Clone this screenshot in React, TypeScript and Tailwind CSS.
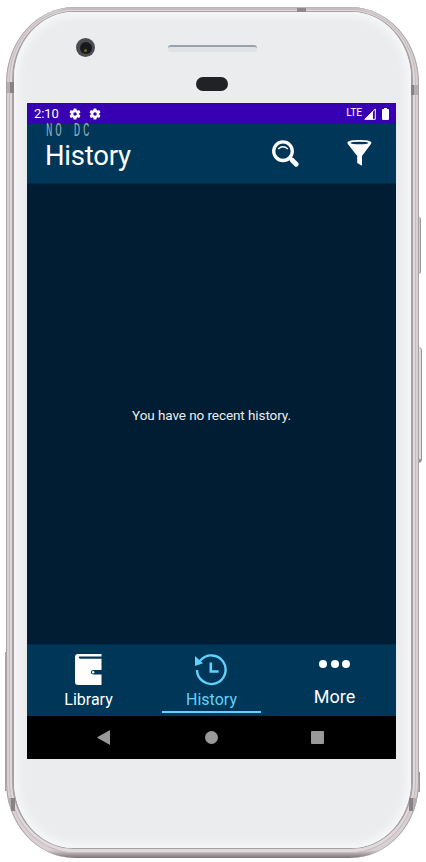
function Gear() {
  return (
    <svg className="size-[14px]" viewBox="0 0 24 24" fill="white">
      <path d="M19.14 12.94c.04-.3.06-.61.06-.94s-.02-.64-.07-.94l2.03-1.58a.49.49 0 0 0 .12-.61l-1.92-3.32a.49.49 0 0 0-.59-.22l-2.39.96c-.5-.38-1.03-.7-1.62-.94l-.36-2.54a.48.48 0 0 0-.48-.41h-3.84a.48.48 0 0 0-.47.41l-.36 2.54c-.59.24-1.13.57-1.62.94l-2.39-.96a.48.48 0 0 0-.59.22L2.74 8.87a.47.47 0 0 0 .12.61l2.03 1.58c-.05.3-.09.63-.09.94s.02.64.07.94l-2.03 1.58a.49.49 0 0 0-.12.61l1.92 3.32c.12.22.37.29.59.22l2.39-.96c.5.38 1.03.7 1.62.94l.36 2.54c.05.24.24.41.48.41h3.84c.24 0 .44-.17.47-.41l.36-2.54c.59-.24 1.13-.56 1.62-.94l2.39.96c.22.08.47 0 .59-.22l1.92-3.32a.48.48 0 0 0-.12-.61zM12 15a3 3 0 1 1 0-6 3 3 0 0 1 0 6z" />
    </svg>
  );
}

function StatusBar() {
  return (
    <div className="flex h-[21px] shrink-0 items-center bg-[#3700b3] pl-[7px] pr-[7px] text-white">
      <span className="w-[34px] text-[13px] leading-none tracking-[-0.1px]">2:10</span>
      <div className="flex gap-[6px]">
        <Gear />
        <Gear />
      </div>
      <span className="ml-auto text-[10.5px] leading-none tracking-[-0.25px]">LTE</span>
      <svg className="ml-[2px] h-[12px] w-[12px]" viewBox="0 0 12 12">
        <path d="M11.3 1V11.3H.8Z" fill="none" stroke="white" strokeWidth="1" />
        <path d="M9 3V11.5H.5Z" fill="white" />
      </svg>
      <svg className="ml-[6px] h-[12px] w-[7px]" viewBox="0 0 7 12">
        <path d="M2 0h3v1h1q1 0 1 1v9q0 1-1 1H1q-1 0-1-1V2q0-1 1-1h1z" fill="white" />
      </svg>
    </div>
  );
}

function Header() {
  return (
    <div className="flex h-[60px] shrink-0 border-b border-[#002b47] bg-[#003658] pl-[18px] pr-[24px]">
      <div className="flex flex-col">
        <span className="ml-px -mt-px h-[16px] w-[46px] origin-left scale-x-[.54] whitespace-pre font-['Liberation_Mono',monospace] text-[20px] leading-[16px] tracking-[5.1px] text-[#8fabbb]">NO DC</span>
        <h1 className="mt-[4px] text-[27.5px] leading-[26px] tracking-[-0.25px] text-white">History</h1>
      </div>
      <svg className="ml-auto mt-[15px] h-[28px] w-[28px]" viewBox="0 0 28 28" fill="none" stroke="white">
        <circle cx="12" cy="12.2" r="9.3" strokeWidth="3.3" />
        <path d="M7.2 10Q12 5.5 16.8 10" strokeWidth="1.4" />
        <path d="M18.5 18.5l2.5 2.5" strokeWidth="3" />
        <path d="M21 21l4.2 4.2" strokeWidth="4.8" strokeLinecap="round" />
      </svg>
      <svg className="ml-[48px] mt-[15px] h-[28px] w-[25px]" viewBox="0 0 25 28">
        <path d="M.4 3.5C.4.2 24.4.2 24.4 3.5q0 1-1.2 2.6L15 17v9.8L10.2 24v-7L1.6 6.1Q.4 4.5.4 3.5Z" fill="white" />
        <ellipse cx="12.4" cy="4" rx="9" ry="1.3" fill="#003658" />
      </svg>
    </div>
  );
}

function BottomTabs() {
  return (
    <div className="grid h-[72px] shrink-0 grid-cols-3 border-t border-[#002d4b] bg-[#003658] text-white">
      <div className="flex flex-col items-center pt-[9px]">
        <svg className="h-[31px] w-[27px]" viewBox="0 0 27 31">
          <path d="M3 0H26.5V2.5H4.8q-1 0-1 .8t1 1.5H26.5V16H19q-3 0-3 2.2t3 2.3h7.5V31H3q-3 0-3-3V3Q0 0 3 0Z" fill="white" />
          <circle cx="18.2" cy="18.2" r="1.2" fill="white" />
        </svg>
        <span className="mt-[5px] text-[16px] leading-[19px]">Library</span>
      </div>
      <div className="flex flex-col items-center pt-[9px] text-[#61d2fb]">
        <svg className="mr-px h-[32px] w-[34px]" viewBox="0 0 34 32" fill="none" stroke="currentColor">
          <path d="M6.2 6.7A14.3 14.3 0 1 1 3 16" strokeWidth="2.4" />
          <path d="M1 2L9 9.3 1 12Z" fill="currentColor" stroke="none" />
          <path d="M16.8 8.5v9h7.8" strokeWidth="2.6" />
        </svg>
        <span className="mt-[4px] text-[16px] leading-[19px]">History</span>
        <div className="mt-[2px] h-[2px] w-[99px] bg-[#61d2fb]" />
      </div>
      <div className="flex flex-col items-center pt-[15px]">
        <div className="flex gap-[3.5px]">
          <i className="size-[8px] rounded-full bg-white" />
          <i className="size-[8px] rounded-full bg-white" />
          <i className="size-[8px] rounded-full bg-white" />
        </div>
        <span className="mt-[18px] text-[18px] leading-[21px]">More</span>
      </div>
    </div>
  );
}

function SystemNav() {
  return (
    <div className="flex h-[43px] shrink-0 items-center bg-black pl-[69px] pr-[72px]">
      <svg className="size-[15px]" viewBox="0 0 15 15"><path d="M14 0V15L.8 7.5Z" fill="#999" /></svg>
      <i className="ml-[94px] size-[13px] rounded-full bg-[#999]" />
      <i className="ml-auto size-[13px] rounded-[1px] bg-[#999]" />
    </div>
  );
}

export default function App() {
  return (
    <div className="relative h-[862px] w-[426px] overflow-hidden bg-white pl-[6px] pt-[7px] font-[Roboto,sans-serif]">
      <div className="absolute left-[5px] top-[652px] h-[139px] w-[2px] bg-[#a9a3a5]" />
      <div className="absolute left-[418px] top-[217px] h-[57px] w-[3px] rounded-r-sm border-r border-[#9a9697] bg-[#d0cbcc]" />
      <div className="absolute left-[418px] top-[347px] h-[116px] w-[4px] rounded-r-sm border-b-4 border-r border-[#9a9697] bg-[#dddfdc]" />
      <div className="absolute left-[418px] top-[772px] h-[20px] w-[2px] bg-[#9a9697]" />
      <div className="relative h-[851px] w-[413px] overflow-hidden rounded-[69px/76px] bg-[linear-gradient(to_bottom,#b9b2b4,#d8d0d2_4px,#d8d0d2_843px,#7d7376)] pl-[3px] pr-[3px] pt-[2px] shadow-[inset_1px_0_#aaa3a5,inset_-1px_0_#aaa3a5]">
        <div className="h-[844px] rounded-[65px/72px] border border-[#c4bcbe] bg-[#e0d9db] px-[2px] pb-[3px] pt-[1px]">
          <div className="h-full rounded-[62px/68px] border-x-2 border-y border-[#a8a1a3] bg-[#ebecee]">
            <div className="h-full rounded-[60px/67px] bg-[#ebecee] shadow-[inset_0_0_9px_4px_#f7f8fa]" />
          </div>
        </div>
        <i className="absolute left-[1px] top-[75px] h-[11px] w-[7px] bg-[linear-gradient(to_right,#b4aeb0_50%,#8a8386_50%)]" />
        <i className="absolute right-[1px] top-[78px] h-[10px] w-[7px] bg-[linear-gradient(to_left,#b4aeb0_50%,#8a8386_50%)]" />
        <i className="absolute left-[291px] top-[1px] h-[4px] w-[9px] bg-[#918789]" />
        <i className="absolute left-[1px] top-[791px] h-[13px] w-[8px] bg-[linear-gradient(to_right,#b4aeb0_50%,#8a8386_50%)]" />
        <i className="absolute right-[2px] top-[791px] h-[13px] w-[8px] bg-[linear-gradient(to_left,#b4aeb0_50%,#8a8386_50%)]" />
      </div>
      <div className="absolute left-[76px] top-[38px] flex size-[19px] items-center justify-center rounded-full bg-[#4b4d52]">
        <i className="flex size-[12px] items-center justify-center rounded-full bg-[#17191c]">
          <i className="mt-[5px] size-[3px] rounded-full bg-[#706821]" />
        </i>
      </div>
      <div className="absolute left-[168px] top-[45px] h-[7px] w-[89px] rounded-[3px] border-t-2 border-[#9aa3ac] bg-[#dfe3e5]" />
      <div className="absolute left-[196px] top-[77px] h-[14px] w-[32px] rounded-full bg-[#202226]" />
      <main className="absolute left-[27px] top-[103px] flex h-[656px] w-[369px] flex-col bg-[#001d33]">
        <StatusBar />
        <Header />
        <div className="flex flex-1 items-center justify-center pt-[3px] text-[13.5px] tracking-[-0.08px] text-[#e9edf0]">You have no recent history.</div>
        <BottomTabs />
        <SystemNav />
      </main>
    </div>
  );
}
